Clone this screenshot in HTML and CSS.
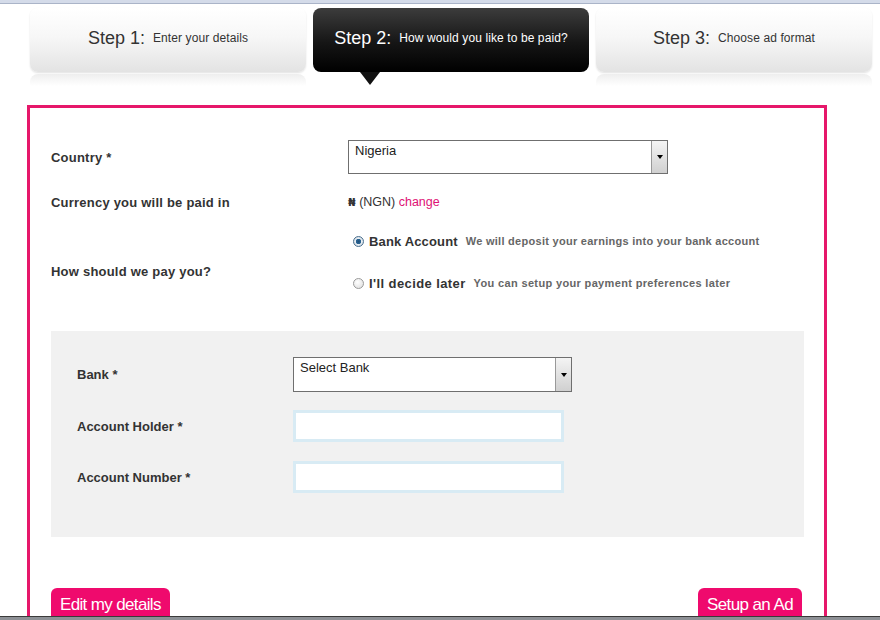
FILE: index.html
```html
<!DOCTYPE html>
<html>
<head>
<meta charset="utf-8">
<link rel="stylesheet" href="styles.css">
</head>
<body>
<div class="chrome-top"></div>
<div class="steps">
  <div class="step">
    <div class="tab"><span class="num">Step 1:</span><span class="desc">Enter your details</span></div>
    <div class="reflect"></div>
  </div>
  <div class="step active">
    <div class="tab"><span class="num">Step 2:</span><span class="desc">How would you like to be paid?</span></div>
    <div class="pointer"></div>
  </div>
  <div class="step">
    <div class="tab"><span class="num">Step 3:</span><span class="desc">Choose ad format</span></div>
    <div class="reflect"></div>
  </div>
</div>

<div class="card">
  <div class="row country-row">
    <div class="label">Country *</div>
    <div class="select country-select"><span class="sel-text">Nigeria</span><span class="sel-btn"><span class="arrow"></span></span></div>
  </div>
  <div class="row currency-row">
    <div class="label">Currency you will be paid in</div>
    <div class="currency"><span class="naira">₦</span> (NGN) <a class="change">change</a></div>
  </div>
  <div class="row pay-row">
    <div class="label pay-label">How should we pay you?</div>
    <div class="options">
      <div class="option"><span class="radio checked"></span><span class="opt-title">Bank Account</span><span class="opt-desc">We will deposit your earnings into your bank account</span></div>
      <div class="option second"><span class="radio"></span><span class="opt-title">I'll decide later</span><span class="opt-desc">You can setup your payment preferences later</span></div>
    </div>
  </div>

  <div class="panel">
    <div class="prow">
      <div class="plabel">Bank *</div>
      <div class="select bank-select"><span class="sel-text">Select Bank</span><span class="sel-btn"><span class="arrow"></span></span></div>
    </div>
    <div class="prow holder">
      <div class="plabel">Account Holder *</div>
      <div class="input"></div>
    </div>
    <div class="prow number">
      <div class="plabel">Account Number *</div>
      <div class="input"></div>
    </div>
  </div>

  <div class="actions">
    <span class="btn edit">Edit my details</span>
    <span class="btn setup">Setup an Ad</span>
  </div>
</div>
<div class="taskbar"></div>
</body>
</html>
```

FILE: styles.css
```css
html, body {
  margin: 0;
  padding: 0;
  background: #fff;
  overflow: hidden;
  height: 620px;
}
body {
  font-family: "Liberation Sans", Arial, sans-serif;
  color: #333;
}
.chrome-top {
  height: 3px;
  background: #d4dbe9;
  border-bottom: 1px solid #aab4c8;
}
.steps {
  display: flex;
  gap: 7px;
  padding-left: 30px;
  margin-top: 4px;
}
.step {
  width: 276px;
}
.tab {
  height: 64px;
  box-sizing: border-box;
  border-radius: 8px;
  background: linear-gradient(#ffffff, #f7f7f7 45%, #e3e3e3);
  box-shadow: 0 1px 2px rgba(0, 0, 0, 0.12);
  display: flex;
  align-items: center;
  justify-content: center;
  gap: 8px;
  padding-bottom: 4px;
  color: #333;
}
.num {
  font-size: 18px;
}
.desc {
  font-size: 12px;
  letter-spacing: 0.1px;
}
.reflect {
  height: 12px;
  margin-top: 2px;
  border-radius: 8px 8px 0 0;
  background: linear-gradient(#eeeeee, #ffffff);
}
.active .tab {
  background: linear-gradient(#3c3c3c, #151515 55%, #000);
  color: #fff;
  box-shadow: none;
}
.pointer {
  width: 0;
  height: 0;
  margin-left: 47px;
  border-left: 10px solid transparent;
  border-right: 10px solid transparent;
  border-top: 13px solid #111;
}
.card {
  margin-left: 27px;
  margin-top: 19px;
  width: 800px;
  height: 560px;
  box-sizing: border-box;
  border: 3px solid #e6176a;
  border-bottom: none;
  padding: 32px 20px 0 21px;
}
.row {
  display: grid;
  grid-template-columns: 297px 1fr;
  align-items: center;
}
.label {
  font-weight: bold;
  font-size: 13px;
  color: #333;
  letter-spacing: 0.22px;
}
.plabel {
  font-weight: bold;
  font-size: 13px;
  color: #333;
}
.select {
  display: flex;
  box-sizing: border-box;
  border: 1px solid #6f6f6f;
  background: #fff;
}
.sel-text {
  flex: 1;
  font-size: 13px;
  color: #222;
  padding: 2px 6px;
}
.sel-btn {
  width: 15px;
  border-left: 1px solid #999;
  background: linear-gradient(#f4f4f4, #d0d0d0);
  display: flex;
  align-items: center;
  justify-content: center;
}
.arrow {
  width: 0;
  height: 0;
  border-left: 3px solid transparent;
  border-right: 3px solid transparent;
  border-top: 4px solid #000;
}
.country-select {
  width: 320px;
  height: 34px;
}
.currency-row {
  margin-top: 18px;
  height: 20px;
}
.currency {
  font-size: 12.5px;
  color: #333;
}
.naira {
  font-family: "DejaVu Sans", sans-serif;
  font-size: 11px;
  font-weight: bold;
}
.change {
  color: #de1275;
}
.pay-row {
  margin-top: 19px;
  align-items: start;
}
.pay-label {
  margin-top: 31px;
  line-height: 20px;
}
.options {
  padding-left: 5px;
}
.option {
  display: flex;
  align-items: center;
  height: 20px;
}
.option.second {
  margin-top: 22px;
}
.radio {
  width: 11px;
  height: 11px;
  box-sizing: border-box;
  border-radius: 50%;
  border: 1px solid #9a9a9a;
  background: radial-gradient(circle at 40% 35%, #fff, #dcdcdc);
  margin-right: 5px;
}
.radio.checked {
  border-color: #4a6f8e;
  background: radial-gradient(circle, #1f4f7a 0, #2d6795 2.5px, #e9eef3 3px, #cfd8e0 5px);
}
.opt-title {
  font-size: 13px;
  font-weight: bold;
  color: #333;
  letter-spacing: 0.15px;
}
.opt-desc {
  font-size: 11px;
  font-weight: bold;
  color: #666;
  margin-left: 8px;
  letter-spacing: 0.28px;
}
.second .opt-title {
  letter-spacing: 0.4px;
}
.second .opt-desc {
  letter-spacing: 0.35px;
}
.panel {
  margin-top: 38px;
  background: #f1f1f1;
  padding: 26px 0 44px 26px;
}
.prow {
  display: grid;
  grid-template-columns: 216px 1fr;
  align-items: center;
}
.bank-select {
  width: 279px;
  height: 35px;
}
.input {
  width: 271px;
  height: 32px;
  box-sizing: border-box;
  border: 3px solid #d8ebf4;
  background: #fff;
}
.holder {
  margin-top: 18px;
}
.number {
  margin-top: 19px;
}
.actions {
  margin-top: 51px;
  display: flex;
  justify-content: space-between;
  padding-right: 2px;
}
.btn {
  display: block;
  background: #ef0a6d;
  color: #fff;
  font-family: "Liberation Sans Narrow", "Liberation Sans", sans-serif;
  font-size: 17px;
  border-radius: 6px 6px 0 0;
  padding: 8px 9px 7px;
  line-height: 18px;
}
.btn.edit {
  letter-spacing: -0.65px;
}
.btn.setup {
  letter-spacing: -0.6px;
}
.taskbar {
  position: fixed;
  left: 0;
  right: 0;
  bottom: 0;
  height: 3px;
  border-top: 1px solid #3a3a3a;
  background: #8d9095;
}
```
